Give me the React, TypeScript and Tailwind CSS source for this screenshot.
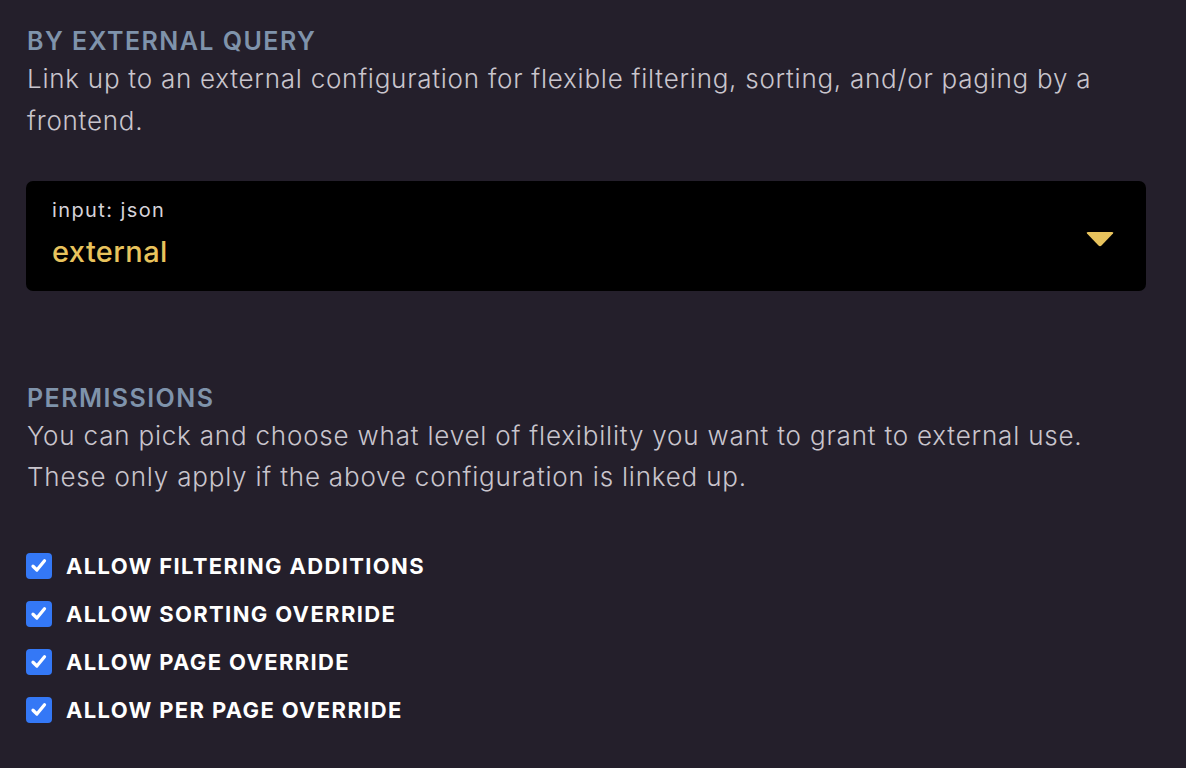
import React from "react";

const items = [
  "ALLOW FILTERING ADDITIONS",
  "ALLOW SORTING OVERRIDE",
  "ALLOW PAGE OVERRIDE",
  "ALLOW PER PAGE OVERRIDE",
];

function Check() {
  return (
    <span className="flex h-[26px] w-[26px] items-center justify-center rounded-[4px] bg-[#3478f6]">
      <svg width="20" height="20" viewBox="0 0 16 16" fill="none">
        <path d="M3.2 8.2 L6.3 11.2 L12.4 3.8" stroke="white" strokeWidth="2.6" strokeLinecap="round" strokeLinejoin="round" />
      </svg>
    </span>
  );
}

export default function App() {
  return (
    <div
      className="min-h-[768px] w-[1186px] bg-[#241f2b] px-[27px] pt-[24px] text-white"
      style={{ fontFamily: "Inter, 'Noto Sans', sans-serif" }}
    >
      <h2 className="text-[25px] font-semibold leading-[34px] tracking-[1.45px] text-[#7f93ab]">BY EXTERNAL QUERY</h2>
      <p className="w-[1100px] text-[26px] font-light leading-[42px] tracking-[0.75px] text-[#c9c5cd]">
        Link up to an external configuration for flexible filtering, sorting, and/or paging by a frontend.
      </p>
      <div className="mt-[39px] ml-[-1px] flex h-[110px] w-[1120px] justify-between rounded-[7px] bg-black pl-[26px] pr-[32px]">
        <div className="flex flex-col pt-[16px]">
          <span className="text-[20px] leading-[26px] tracking-[1.4px] text-[#d6d3da]">input: json</span>
          <span className="mt-[11px] text-[29px] font-medium leading-[36px] tracking-[0.4px] text-[#e8c35d]">external</span>
        </div>
        <svg className="mt-[51px]" width="28" height="15" viewBox="0 0 28 15">
          <path d="M1 1.5 Q0 0 2 0 L26 0 Q28 0 27 1.5 L15.5 13.5 Q14 15 12.5 13.5 Z" fill="#e8c35d" />
        </svg>
      </div>
      <h2 className="mt-[90px] text-[25px] font-semibold leading-[34px] tracking-[1.45px] text-[#7f93ab]">PERMISSIONS</h2>
      <p className="text-[26px] font-light leading-[41px] tracking-[0.8px] text-[#c9c5cd]">
        You can pick and choose what level of flexibility you want to grant to external use.
        <br />
        These only apply if the above configuration is linked up.
      </p>
      <div className="mt-[56px] flex flex-col gap-[22px]">
        {items.map((t) => (
          <label key={t} className="ml-[-1px] flex h-[26px] items-center gap-[14px]">
            <Check />
            <span className="text-[22px] font-bold leading-[26px] tracking-[1.35px] text-white">{t}</span>
          </label>
        ))}
      </div>
    </div>
  );
}
